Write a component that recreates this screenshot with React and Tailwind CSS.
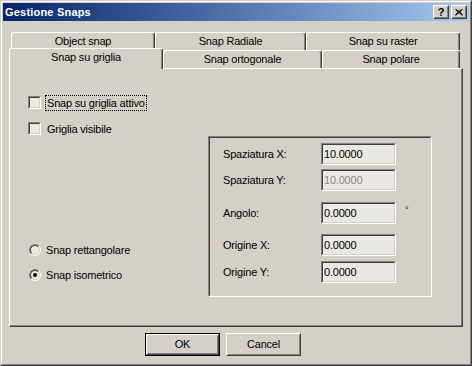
import React from 'react';

// Classic Win2000 "Gestione Snaps" dialog
const FACE = 'bg-[#d4d0c8]';

function Sunken({ className = '', innerClass = '', children }) {
  return (
    <div className={`flex border border-t-[#808080] border-l-[#808080] border-r-white border-b-white ${className}`}>
      <div className={`flex-1 flex border border-t-[#404040] border-l-[#404040] border-r-[#d4d0c8] border-b-[#d4d0c8] ${innerClass}`}>
        {children}
      </div>
    </div>
  );
}

function Raised({ className = '', innerClass = '', children }) {
  return (
    <div className={`flex border border-t-white border-l-white border-r-[#404040] border-b-[#404040] ${className}`}>
      <div className={`flex-1 flex border border-t-[#d4d0c8] border-l-[#d4d0c8] border-r-[#808080] border-b-[#808080] ${FACE} ${innerClass}`}>
        {children}
      </div>
    </div>
  );
}

function Checkbox({ label, focused }) {
  return (
    <div className="flex items-start h-[16px]">
      <Sunken className="w-[13px] h-[13px] mt-[1px]" innerClass="bg-[#eae9e3]" />
      <span
        className={`ml-[4px] px-[1px] h-[16px] leading-[15px] border border-dotted ${
          focused ? 'border-black' : 'border-transparent'
        }`}
      >
        {label}
      </span>
    </div>
  );
}

function Radio({ label, checked }) {
  return (
    <div className="flex items-center h-[14px] pl-[1px]">
      <div className="w-[12px] h-[12px] rounded-full border border-t-[#808080] border-l-[#808080] border-r-white border-b-white flex">
        <div className="flex-1 rounded-full border border-t-[#404040] border-l-[#404040] border-r-[#d4d0c8] border-b-[#d4d0c8] bg-[#eae9e3] flex items-center justify-center">
          {checked && <div className="w-[4px] h-[4px] rounded-full bg-black" />}
        </div>
      </div>
      <span className="ml-[5px] leading-[14px]">{label}</span>
    </div>
  );
}

function Field({ label, value, disabled, mt, extra }) {
  return (
    <div className={`flex items-center ${mt}`}>
      <span className="w-[98px] ml-[13px]">{label}</span>
      <Sunken className="w-[75px] h-[22px]" innerClass="bg-[#e9e8e2] items-center pl-[1px]">
        <span className={disabled ? 'text-[#8a8a8a]' : 'text-black'}>{value}</span>
      </Sunken>
      {extra}
    </div>
  );
}

function Tab({ label, w, selected }) {
  return (
    <div
      className={`${w} ${FACE} flex justify-center rounded-t-[3px] border-t border-l border-t-white border-l-white border-r border-r-[#404040] shadow-[inset_-1px_0_#808080] ${
        selected ? 'relative z-10 -top-[2px] h-[21px] pt-[2px]' : 'h-[18px] pt-[2px]'
      }`}
    >
      <span className="leading-[13px]">{label}</span>
    </div>
  );
}

export default function App() {
  return (
    <div className="w-[472px] h-[366px] font-['Liberation_Sans',Arial,sans-serif] text-[11px] tracking-[-0.2px] text-black">
      <div className="h-full flex border border-t-[#d4d0c8] border-l-[#d4d0c8] border-r-[#404040] border-b-[#404040]">
        <div className={`flex-1 flex flex-col border border-t-white border-l-white border-r-[#808080] border-b-[#808080] ${FACE} p-[1px]`}>
          {/* Title bar */}
          <div className="h-[18px] flex items-center bg-gradient-to-r from-[#0a246a] to-[#a6caf0] pl-[2px] pr-[2px]">
            <span className="text-white font-bold text-[11px] leading-none tracking-[0.2px]">Gestione Snaps</span>
            <div className="ml-auto flex gap-[2px]">
              <Raised className="w-[16px] h-[14px]" innerClass="items-center justify-center">
                <span className="font-bold text-[11px] leading-none">?</span>
              </Raised>
              <Raised className="w-[16px] h-[14px]" innerClass="items-center justify-center">
                <svg width="8" height="7" viewBox="0 0 8 7">
                  <path d="M0.5 0.5 L7.5 6.5 M1.5 0.5 L7.5 5.5 M7.5 0.5 L0.5 6.5 M6.5 0.5 L0.5 5.5" stroke="black" strokeWidth="1" fill="none" />
                </svg>
              </Raised>
            </div>
          </div>

          {/* Tab control */}
          <div className="ml-[6px] mt-[11px] w-[454px] flex flex-col">
            <div className="flex pl-[2px]">
              <Tab label="Object snap" w="w-[144px]" />
              <Tab label="Snap Radiale" w="w-[151px]" />
              <Tab label="Snap su raster" w="w-[154px]" />
            </div>
            <div className="flex h-[18px]">
              <Tab label="Snap su griglia" w="w-[154px]" selected />
              <Tab label="Snap ortogonale" w="w-[159px]" />
              <Tab label="Snap polare" w="w-[138px]" />
            </div>
            {/* Panel */}
            <div className="h-[259px] flex border border-t-white border-l-white border-r-[#404040] border-b-[#404040]">
              <div className="flex-1 flex shadow-[inset_-1px_-1px_#808080]">
                <div className="w-[198px] flex flex-col pl-[18px] pt-[26px]">
                  <Checkbox label="Snap su griglia attivo" focused />
                  <div className="mt-[10px]">
                    <Checkbox label="Griglia visibile" />
                  </div>
                  <div className="mt-[106px]">
                    <Radio label="Snap rettangolare" />
                  </div>
                  <div className="mt-[11px]">
                    <Radio label="Snap isometrico" checked />
                  </div>
                </div>
                <div className="mt-[67px]">
                  <Sunken className="w-[224px] h-[161px]" innerClass="flex-col">
                    <Field label="Spaziatura X:" value="10.0000" mt="mt-[5px]" />
                    <Field label="Spaziatura Y:" value="10.0000" disabled mt="mt-[4px]" />
                    <Field
                      label="Angolo:"
                      value="0.0000"
                      mt="mt-[11px]"
                      extra={<span className="ml-[9px] -mt-[4px] text-[9px]">°</span>}
                    />
                    <Field label="Origine X:" value="0.0000" mt="mt-[10px]" />
                    <Field label="Origine Y:" value="0.0000" mt="mt-[5px]" />
                  </Sunken>
                </div>
              </div>
            </div>
          </div>

          {/* Buttons */}
          <div className="flex mt-[6px] ml-[142px]">
            <div className="w-[75px] h-[23px] border border-black flex">
              <Raised className="flex-1" innerClass="items-center justify-center">
                <span>OK</span>
              </Raised>
            </div>
            <Raised className="w-[75px] h-[23px] ml-[6px]" innerClass="items-center justify-center">
              <span>Cancel</span>
            </Raised>
          </div>
        </div>
      </div>
    </div>
  );
}
